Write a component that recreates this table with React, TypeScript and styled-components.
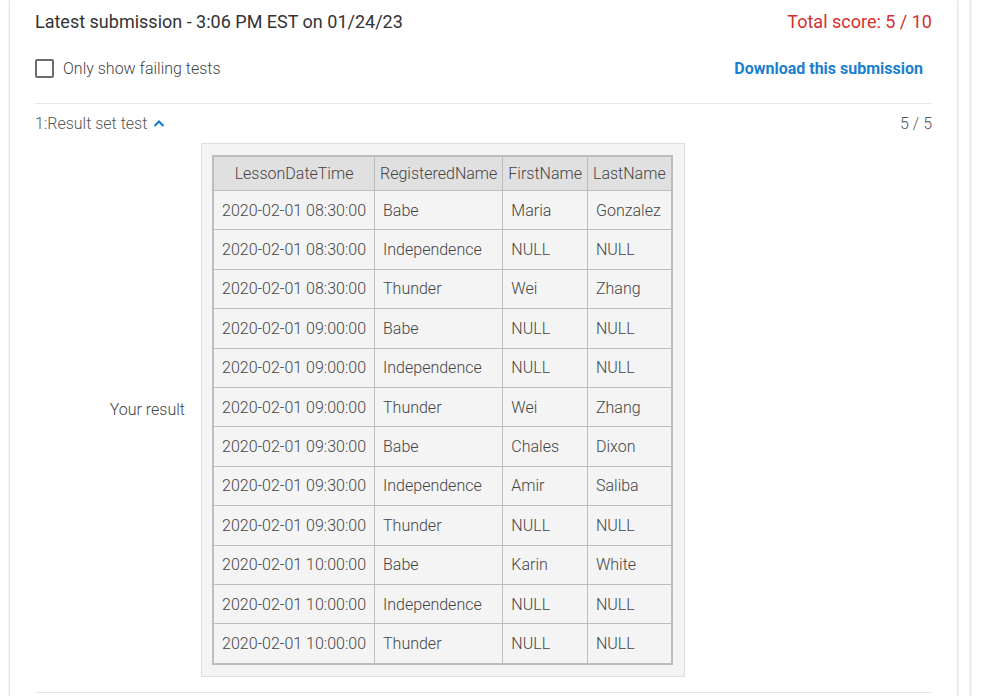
import React from "react";
import styled, { createGlobalStyle } from "styled-components";

const Global = createGlobalStyle`
  html, body { margin: 0; padding: 0; background: #fff; }
  body { font-family: Roboto, "Noto Sans", Arial, sans-serif; overflow: hidden; }
`;

const Page = styled.div`
  display: flex;
  width: 1004px;
  height: 696px;
  overflow: hidden;
  padding-left: 10px;
  box-sizing: border-box;
`;

const Card = styled.div`
  width: 947px;
  height: 720px;
  background: #fff;
  box-shadow: -1px 0 2px rgba(0,0,0,0.12), 1px 0 2px rgba(0,0,0,0.14);
  padding: 0 25px 0 25px;
  box-sizing: border-box;
  flex-shrink: 0;
`;

const Gutter = styled.div`
  width: 3px;
  margin-left: 12px;
  background: #f0f0f0;
  height: 100%;
`;

const HeaderRow = styled.div`
  display: flex;
  justify-content: space-between;
  align-items: center;
  height: 42px;
`;

const Title = styled.div`
  font-size: 18px;
  color: #333;
`;

const Score = styled.div`
  font-size: 18px;
  color: #d32f2f;
`;

const ControlRow = styled.div`
  display: flex;
  justify-content: space-between;
  align-items: center;
  height: 52px;
  padding-bottom: 9px;
  border-bottom: 1px solid #e6e6e6;
`;

const CheckLabel = styled.label`
  display: flex;
  align-items: center;
  gap: 9px;
  font-size: 16px;
  font-weight: 300;
  color: #444;
`;

const Box = styled.span`
  width: 15px;
  height: 15px;
  border: 2px solid #6b6b6b;
  border-radius: 2px;
  display: inline-block;
`;

const Download = styled.a`
  font-size: 16px;
  font-weight: 700;
  color: #1a7fd0;
  margin-right: 9px;
  text-decoration: none;
`;

const TestRow = styled.div`
  display: flex;
  justify-content: space-between;
  align-items: center;
  height: 40px;
  margin-top: -1px;
  font-size: 16px;
  font-weight: 300;
  color: #555;
`;

const TestName = styled.div`
  display: flex;
  align-items: center;
  gap: 6px;
`;

const ResultArea = styled.div`
  display: flex;
  align-items: center;
  gap: 16px;
  padding-bottom: 15px;
  border-bottom: 1px solid #e6e6e6;
`;

const ResultLabel = styled.div`
  width: 150px;
  text-align: right;
  font-size: 16px;
  font-weight: 300;
  color: #444;
`;

const TableWrap = styled.div`
  background: #f4f4f4;
  border: 1px solid #ddd;
  padding: 11px 11px 11px 10px;
`;

const Table = styled.table`
  border-collapse: collapse;
  border: 2px solid #bdbdbd;
  font-size: 16px;
  font-weight: 300;
  color: #444;
`;

const Th = styled.th`
  background: #e0e0e0;
  font-weight: 300;
  height: 33px;
  padding: 0 5px;
  border: 1px solid #bdbdbd;
  text-align: center;
  white-space: nowrap;
`;

const Td = styled.td`
  height: 38.4px;
  padding: 0 8px;
  border: 1px solid #bdbdbd;
  white-space: nowrap;
  text-align: left;
`;

const rows = [
  ["2020-02-01 08:30:00", "Babe", "Maria", "Gonzalez"],
  ["2020-02-01 08:30:00", "Independence", "NULL", "NULL"],
  ["2020-02-01 08:30:00", "Thunder", "Wei", "Zhang"],
  ["2020-02-01 09:00:00", "Babe", "NULL", "NULL"],
  ["2020-02-01 09:00:00", "Independence", "NULL", "NULL"],
  ["2020-02-01 09:00:00", "Thunder", "Wei", "Zhang"],
  ["2020-02-01 09:30:00", "Babe", "Chales", "Dixon"],
  ["2020-02-01 09:30:00", "Independence", "Amir", "Saliba"],
  ["2020-02-01 09:30:00", "Thunder", "NULL", "NULL"],
  ["2020-02-01 10:00:00", "Babe", "Karin", "White"],
  ["2020-02-01 10:00:00", "Independence", "NULL", "NULL"],
  ["2020-02-01 10:00:00", "Thunder", "NULL", "NULL"],
];

export default function App() {
  return (
    <>
      <Global />
      <Page>
        <Card>
          <HeaderRow>
            <Title>Latest submission - 3:06 PM EST on 01/24/23</Title>
            <Score>Total score: 5 / 10</Score>
          </HeaderRow>
          <ControlRow>
            <CheckLabel>
              <Box />
              Only show failing tests
            </CheckLabel>
            <Download>Download this submission</Download>
          </ControlRow>
          <TestRow>
            <TestName>
              1:Result set test
              <svg width="12" height="8" viewBox="0 0 12 8">
                <path d="M1.5 7 L6 2.5 L10.5 7" fill="none" stroke="#1a7fd0" strokeWidth="2.2" />
              </svg>
            </TestName>
            <div>5 / 5</div>
          </TestRow>
          <ResultArea>
            <ResultLabel>Your result</ResultLabel>
            <TableWrap>
              <Table>
                <thead>
                  <tr>
                    <Th>LessonDateTime</Th>
                    <Th>RegisteredName</Th>
                    <Th>FirstName</Th>
                    <Th>LastName</Th>
                  </tr>
                </thead>
                <tbody>
                  {rows.map((r, i) => (
                    <tr key={i}>
                      {r.map((c, j) => (
                        <Td key={j}>{c}</Td>
                      ))}
                    </tr>
                  ))}
                </tbody>
              </Table>
            </TableWrap>
          </ResultArea>
        </Card>
        <Gutter />
      </Page>
    </>
  );
}
